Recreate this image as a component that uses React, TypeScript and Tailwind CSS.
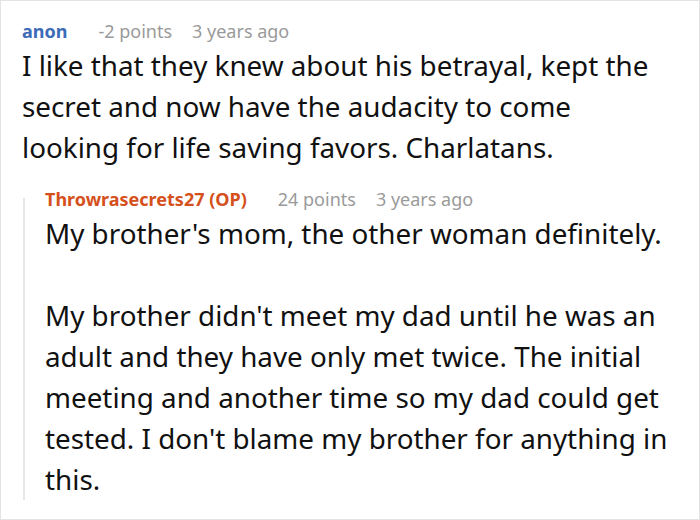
import React from 'react';

const font = { fontFamily: '"Noto Sans", "Open Sans", sans-serif' };

export default function App() {
  return (
    <div className="w-[700px] h-[520px] bg-white border border-[#e3e3e3] overflow-hidden" style={font}>
      <div className="pl-[21px] pt-[16px] pr-[22px]">
        {/* Parent comment */}
        <div className="flex items-baseline text-[18px] leading-[28px]">
          <span className="font-bold text-[#3d6bb8]">anon</span>
          <span className="ml-[31px] text-[#9a9a9a]">-2 points</span>
          <span className="ml-[20px] text-[#9a9a9a]">3 years ago</span>
        </div>
        <p className="pr-[20px] text-[27.8px] leading-[41px] text-[#111]">
          I like that they knew about his betrayal, kept the secret and now have the audacity to come looking for
          life saving favors. Charlatans.
        </p>

        {/* Reply */}
        <div className="mt-[17px] flex">
          <div className="w-[2px] mt-[13px] ml-[1px] bg-[#e6e6e6] shrink-0" />
          <div className="pl-[20px]">
            <div className="flex items-baseline text-[18px] leading-[28px]">
              <span className="font-bold text-[#d5501c]">Throwrasecrets27 (OP)</span>
              <span className="ml-[31px] text-[#9a9a9a]">24 points</span>
              <span className="ml-[20px] text-[#9a9a9a]">3 years ago</span>
            </div>
            <p className="text-[27.8px] leading-[41px] text-[#111]">My brother's mom, the other woman definitely.</p>
            <p className="mt-[41px] text-[27.8px] leading-[41px] text-[#111]">
              My brother didn't meet my dad until he was an adult and they have only met twice. The initial meeting and
              another time so my dad could get tested. I don't blame my brother for anything in this.
            </p>
          </div>
        </div>
      </div>
    </div>
  );
}
